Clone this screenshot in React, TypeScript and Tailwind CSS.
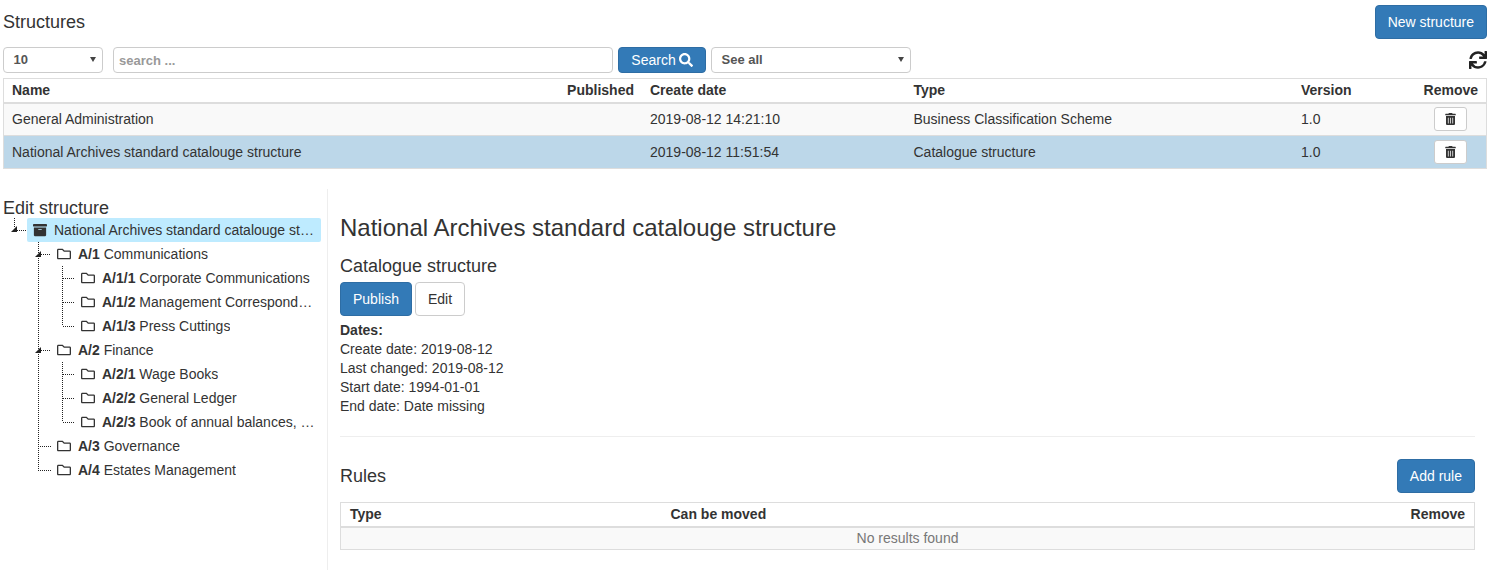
import React from 'react';
import { FaArchive, FaRegFolder, FaSearch, FaSync, FaTrashAlt } from 'react-icons/fa';

const font = { fontFamily: '"Liberation Sans", Arial, sans-serif' };

const structures = [
  { name: 'General Administration', created: '2019-08-12 14:21:10', type: 'Business Classification Scheme', version: '1.0', selected: false },
  { name: 'National Archives standard catalouge structure', created: '2019-08-12 11:51:54', type: 'Catalogue structure', version: '1.0', selected: true },
];

const tree = [
  { code: 'A/1', label: 'Communications', level: 1 },
  { code: 'A/1/1', label: 'Corporate Communications', level: 2 },
  { code: 'A/1/2', label: 'Management Correspondence', level: 2 },
  { code: 'A/1/3', label: 'Press Cuttings', level: 2 },
  { code: 'A/2', label: 'Finance', level: 1 },
  { code: 'A/2/1', label: 'Wage Books', level: 2 },
  { code: 'A/2/2', label: 'General Ledger', level: 2 },
  { code: 'A/2/3', label: 'Book of annual balances, and accounts', level: 2 },
  { code: 'A/3', label: 'Governance', level: 1 },
  { code: 'A/4', label: 'Estates Management', level: 1 },
];

function SelectBox({ label, className }: { label: string; className: string }) {
  return (
    <div className={`relative flex h-[26px] items-center rounded-[4px] border border-[#ccc] bg-white pl-[9.5px] text-[13px] font-bold text-[#555] ${className}`}>
      {label}
      <span className="absolute right-[6px] top-[9px] h-0 w-0 border-x-[3.5px] border-t-[5px] border-x-transparent border-t-[#444]" />
    </div>
  );
}

function PrimaryButton({ children, className = '' }: { children: React.ReactNode; className?: string }) {
  return (
    <button className={`h-[34px] rounded-[4px] border border-[#2e6da4] bg-[#337ab7] px-[12px] text-[14px] text-white ${className}`}>
      {children}
    </button>
  );
}

// dotted connectors of the tree, coordinates relative to the tree block
function TreeLines() {
  const lines = [
    'M14.5 0V10', 'M17 12.5H27',
    'M38.5 24V252', 'M41 36.5H51', 'M41 132.5H51', 'M38 228.5H51', 'M38 252.5H51',
    'M62.5 48V108', 'M63 60.5H75', 'M63 84.5H75', 'M63 108.5H75',
    'M62.5 144V204', 'M63 156.5H75', 'M63 180.5H75', 'M63 204.5H75',
  ];
  return (
    <svg className="absolute left-0 top-0" width="90" height="264">
      {lines.map((d) => (
        <path key={d} d={d} stroke="#222" strokeWidth="1" strokeDasharray="1 1" fill="none" shapeRendering="crispEdges" />
      ))}
      <path d="M11 14L17 14L17 8Z" fill="#222" />
      <path d="M35 39L41 39L41 33Z" fill="#222" />
      <path d="M35 135L41 135L41 129Z" fill="#222" />
    </svg>
  );
}

function Tree() {
  return (
    <div className="relative">
      <TreeLines />
      <div className="ml-[27px] mr-[6px] flex h-[24px] items-center rounded-[2px] bg-[#beebff] pl-[6px] pr-[6px] text-[14px] text-[#333]">
        <FaArchive className="mr-[7px] h-[14px] w-[14px] shrink-0 text-[#333]" />
        <span className="truncate">National Archives standard catalouge structure</span>
      </div>
      {tree.map((node) => (
        <div
          key={node.code}
          className={`flex h-[24px] items-center pr-[11px] text-[14px] text-[#333] ${node.level === 1 ? 'pl-[57px]' : 'pl-[81px]'}`}
        >
          <FaRegFolder className="mr-[7px] h-[14px] w-[14px] shrink-0 text-[#333]" />
          <span className="truncate">
            <b>{node.code}</b> {node.label}
          </span>
        </div>
      ))}
    </div>
  );
}

export default function App() {
  return (
    <div className="flex h-[570px] flex-col overflow-hidden bg-white text-[14px] text-[#333]" style={font}>
      <div className="pl-[3px] pr-[7px] pt-[5px]">
        <div className="flex items-center justify-between">
          <h1 className="text-[18px] leading-[34px]">Structures</h1>
          <PrimaryButton>New structure</PrimaryButton>
        </div>

        <div className="mt-[8px] flex items-center">
          <SelectBox label="10" className="w-[100px]" />
          <input
            placeholder="search ..."
            className="ml-[10px] h-[26px] w-[500px] rounded-[4px] border border-[#ccc] px-[5px] text-[13px] font-bold placeholder:text-[#999]"
          />
          <button className="ml-[5px] flex h-[26px] w-[88px] items-center justify-center gap-[3px] rounded-[4px] border border-[#2e6da4] bg-[#337ab7] text-[14px] text-white">
            Search <FaSearch className="h-[14px] w-[14px]" />
          </button>
          <SelectBox label="See all" className="ml-[5px] w-[200px]" />
          <FaSync className="ml-auto h-[18px] w-[18px] text-[#222]" />
        </div>

        <table className="mt-[5px] w-full table-fixed border-collapse border border-[#ddd]">
          <colgroup>
            <col className="w-[638.5px]" />
            <col className="w-[263.5px]" />
            <col className="w-[387.5px]" />
            <col className="w-[94.5px]" />
            <col />
          </colgroup>
          <thead>
            <tr className="h-[24px] border-b-2 border-[#ddd] font-bold">
              <th className="px-[8px] text-left">
                <div className="flex justify-between">
                  <span>Name</span>
                  <span>Published</span>
                </div>
              </th>
              <th className="px-[8px] text-left">Create date</th>
              <th className="px-[8px] text-left">Type</th>
              <th className="px-[8px] text-left">Version</th>
              <th className="px-[8px] text-right">Remove</th>
            </tr>
          </thead>
          <tbody>
            {structures.map((row) => (
              <tr key={row.name} className={`h-[33px] border-b border-[#ddd] ${row.selected ? 'bg-[#bcd7e9]' : 'bg-[#f9f9f9]'}`}>
                <td className="px-[8px]">{row.name}</td>
                <td className="px-[8px]">{row.created}</td>
                <td className="px-[8px]">{row.type}</td>
                <td className="px-[8px]">{row.version}</td>
                <td className="px-[8px]">
                  <button className="ml-auto mr-[11px] flex h-[24px] w-[33px] items-center justify-center rounded-[3px] border border-[#ccc] bg-white">
                    <FaTrashAlt className="h-[12px] w-[11px] text-[#333]" />
                  </button>
                </td>
              </tr>
            ))}
          </tbody>
        </table>
      </div>

      <div className="mt-[20px] flex flex-1">
        <div className="w-[328px] shrink-0 border-r border-[#eee] pt-[9px]">
          <h2 className="pl-[3px] text-[18px] leading-[20px]">Edit structure</h2>
          <Tree />
        </div>

        <div className="w-[1147px] pl-[12px] pt-[25px]">
          <h2 className="text-[24px] leading-[28px]">National Archives standard catalouge structure</h2>
          <h3 className="mt-[14px] text-[18px] leading-[20px]">Catalogue structure</h3>
          <div className="mt-[6px] flex gap-[3px]">
            <PrimaryButton>Publish</PrimaryButton>
            <button className="h-[34px] rounded-[4px] border border-[#ccc] bg-white px-[12px] text-[14px]">Edit</button>
          </div>
          <div className="mt-[5px] leading-[19px]">
            <div className="font-bold">Dates:</div>
            <div>Create date: 2019-08-12</div>
            <div>Last changed: 2019-08-12</div>
            <div>Start date: 1994-01-01</div>
            <div>End date: Date missing</div>
          </div>
          <hr className="mt-[20px] border-[#eee]" />
          <div className="mt-[22px] flex items-center justify-between">
            <h2 className="text-[18px]">Rules</h2>
            <PrimaryButton>Add rule</PrimaryButton>
          </div>
          <table className="mt-[9px] w-full table-fixed border-collapse border border-[#ddd]">
            <colgroup>
              <col className="w-[321px]" />
              <col />
              <col className="w-[120px]" />
            </colgroup>
            <thead>
              <tr className="h-[24px] border-b-2 border-[#ddd] font-bold">
                <th className="px-[9px] text-left">Type</th>
                <th className="px-[9px] text-left">Can be moved</th>
                <th className="px-[9px] text-right">Remove</th>
              </tr>
            </thead>
            <tbody>
              <tr className="h-[23px] bg-[#f9f9f9]">
                <td colSpan={3} className="text-center text-[#777]">No results found</td>
              </tr>
            </tbody>
          </table>
        </div>
      </div>
    </div>
  );
}
